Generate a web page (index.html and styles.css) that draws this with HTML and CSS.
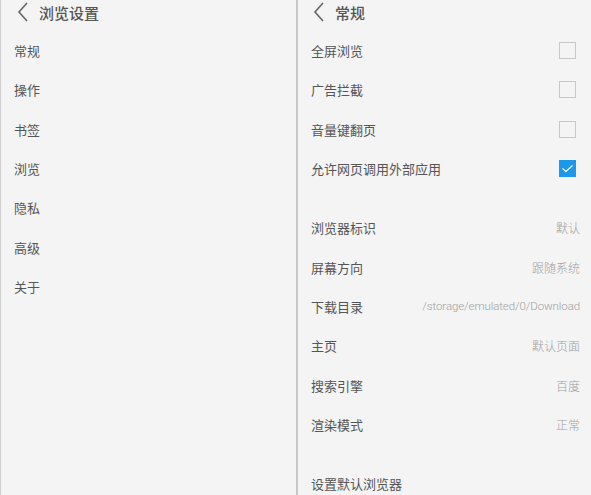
FILE: index.html
```html
<!DOCTYPE html>
<html lang="zh-CN">
<head>
  <meta charset="UTF-8" />
  <title>浏览设置</title>
  <link rel="stylesheet" href="styles.css">
</head>
<body>
  <div class="screen">
    <div class="panel panel-left">
      <div class="header">
        <svg class="back" viewBox="0 0 12 20" width="12" height="20"><path d="M10 1 L2 10 L10 19" /></svg>
        <span class="title">浏览设置</span>
      </div>
      <div class="row">常规</div>
      <div class="row">操作</div>
      <div class="row">书签</div>
      <div class="row">浏览</div>
      <div class="row">隐私</div>
      <div class="row">高级</div>
      <div class="row">关于</div>
    </div>

    <div class="panel panel-right">
      <div class="header">
        <svg class="back" viewBox="0 0 12 20" width="12" height="20"><path d="M10 1 L2 10 L10 19" /></svg>
        <span class="title">常规</span>
      </div>

      <div class="row"><span>全屏浏览</span><span class="check"></span></div>
      <div class="row"><span>广告拦截</span><span class="check"></span></div>
      <div class="row"><span>音量键翻页</span><span class="check"></span></div>
      <div class="row">
        <span>允许网页调用外部应用</span>
        <span class="check checked"><svg viewBox="0 0 17 17" width="17" height="17"><path d="M3.5 8.5 L7 11.5 L13.5 5.5" /></svg></span>
      </div>

      <div class="gap"></div>

      <div class="row"><span>浏览器标识</span><span class="value">默认</span></div>
      <div class="row"><span>屏幕方向</span><span class="value">跟随系统</span></div>
      <div class="row"><span>下载目录</span><span class="value path">/storage/emulated/0/Download</span></div>
      <div class="row"><span>主页</span><span class="value">默认页面</span></div>
      <div class="row"><span>搜索引擎</span><span class="value">百度</span></div>
      <div class="row"><span>渲染模式</span><span class="value">正常</span></div>

      <div class="gap"></div>

      <div class="row"><span>设置默认浏览器</span></div>
    </div>
  </div>
</body>
</html>
```

FILE: styles.css
```css
body {
  margin: 0;
  background: #f4f4f4;
  font-family: Roboto, "Noto Sans CJK SC", sans-serif;
  color: #555;
}
.screen {
  display: flex;
  width: 591px;
  height: 495px;
  overflow: hidden;
}
.panel {
  box-sizing: border-box;
  height: 100%;
}
.panel-left {
  width: 298px;
  border-left: 1px solid #d0d0d0;
  border-right: 2px solid #c8c8c8;
  padding-left: 13px;
}
.panel-right {
  flex: 1;
  padding-left: 13px;
  padding-right: 11px;
}
.header {
  height: 31px;
  display: flex;
  align-items: center;
  padding-bottom: 7px;
  box-sizing: border-box;
}
.panel-left .header {
  padding-left: 3px;
}
.panel-right .header {
  padding-left: 2px;
}
.back {
  fill: none;
  stroke: #666;
  stroke-width: 1.6;
  margin-right: 10px;
}
.title {
  font-family: "Noto Sans CJK SC", sans-serif;
  font-size: 15px;
  font-weight: 500;
  color: #555;
}
.row {
  height: 39.3px;
  display: flex;
  align-items: center;
  justify-content: space-between;
  font-family: "Noto Sans CJK SC", sans-serif;
  font-size: 13px;
}
.gap {
  height: 20px;
}
.value {
  font-family: Roboto, "Noto Sans CJK SC", sans-serif;
  font-size: 12px;
  font-weight: 300;
  color: #a0a0a0;
}
.value.path {
  font-size: 11.5px;
  letter-spacing: -0.1px;
}
.check {
  box-sizing: border-box;
  width: 17px;
  height: 17px;
  border: 1.5px solid #c8c8c8;
  margin-right: 4px;
}
.check.checked {
  border: none;
  background: #1c98e8;
}
.check svg {
  display: block;
  fill: none;
  stroke: #fff;
  stroke-width: 1.3;
}
```
